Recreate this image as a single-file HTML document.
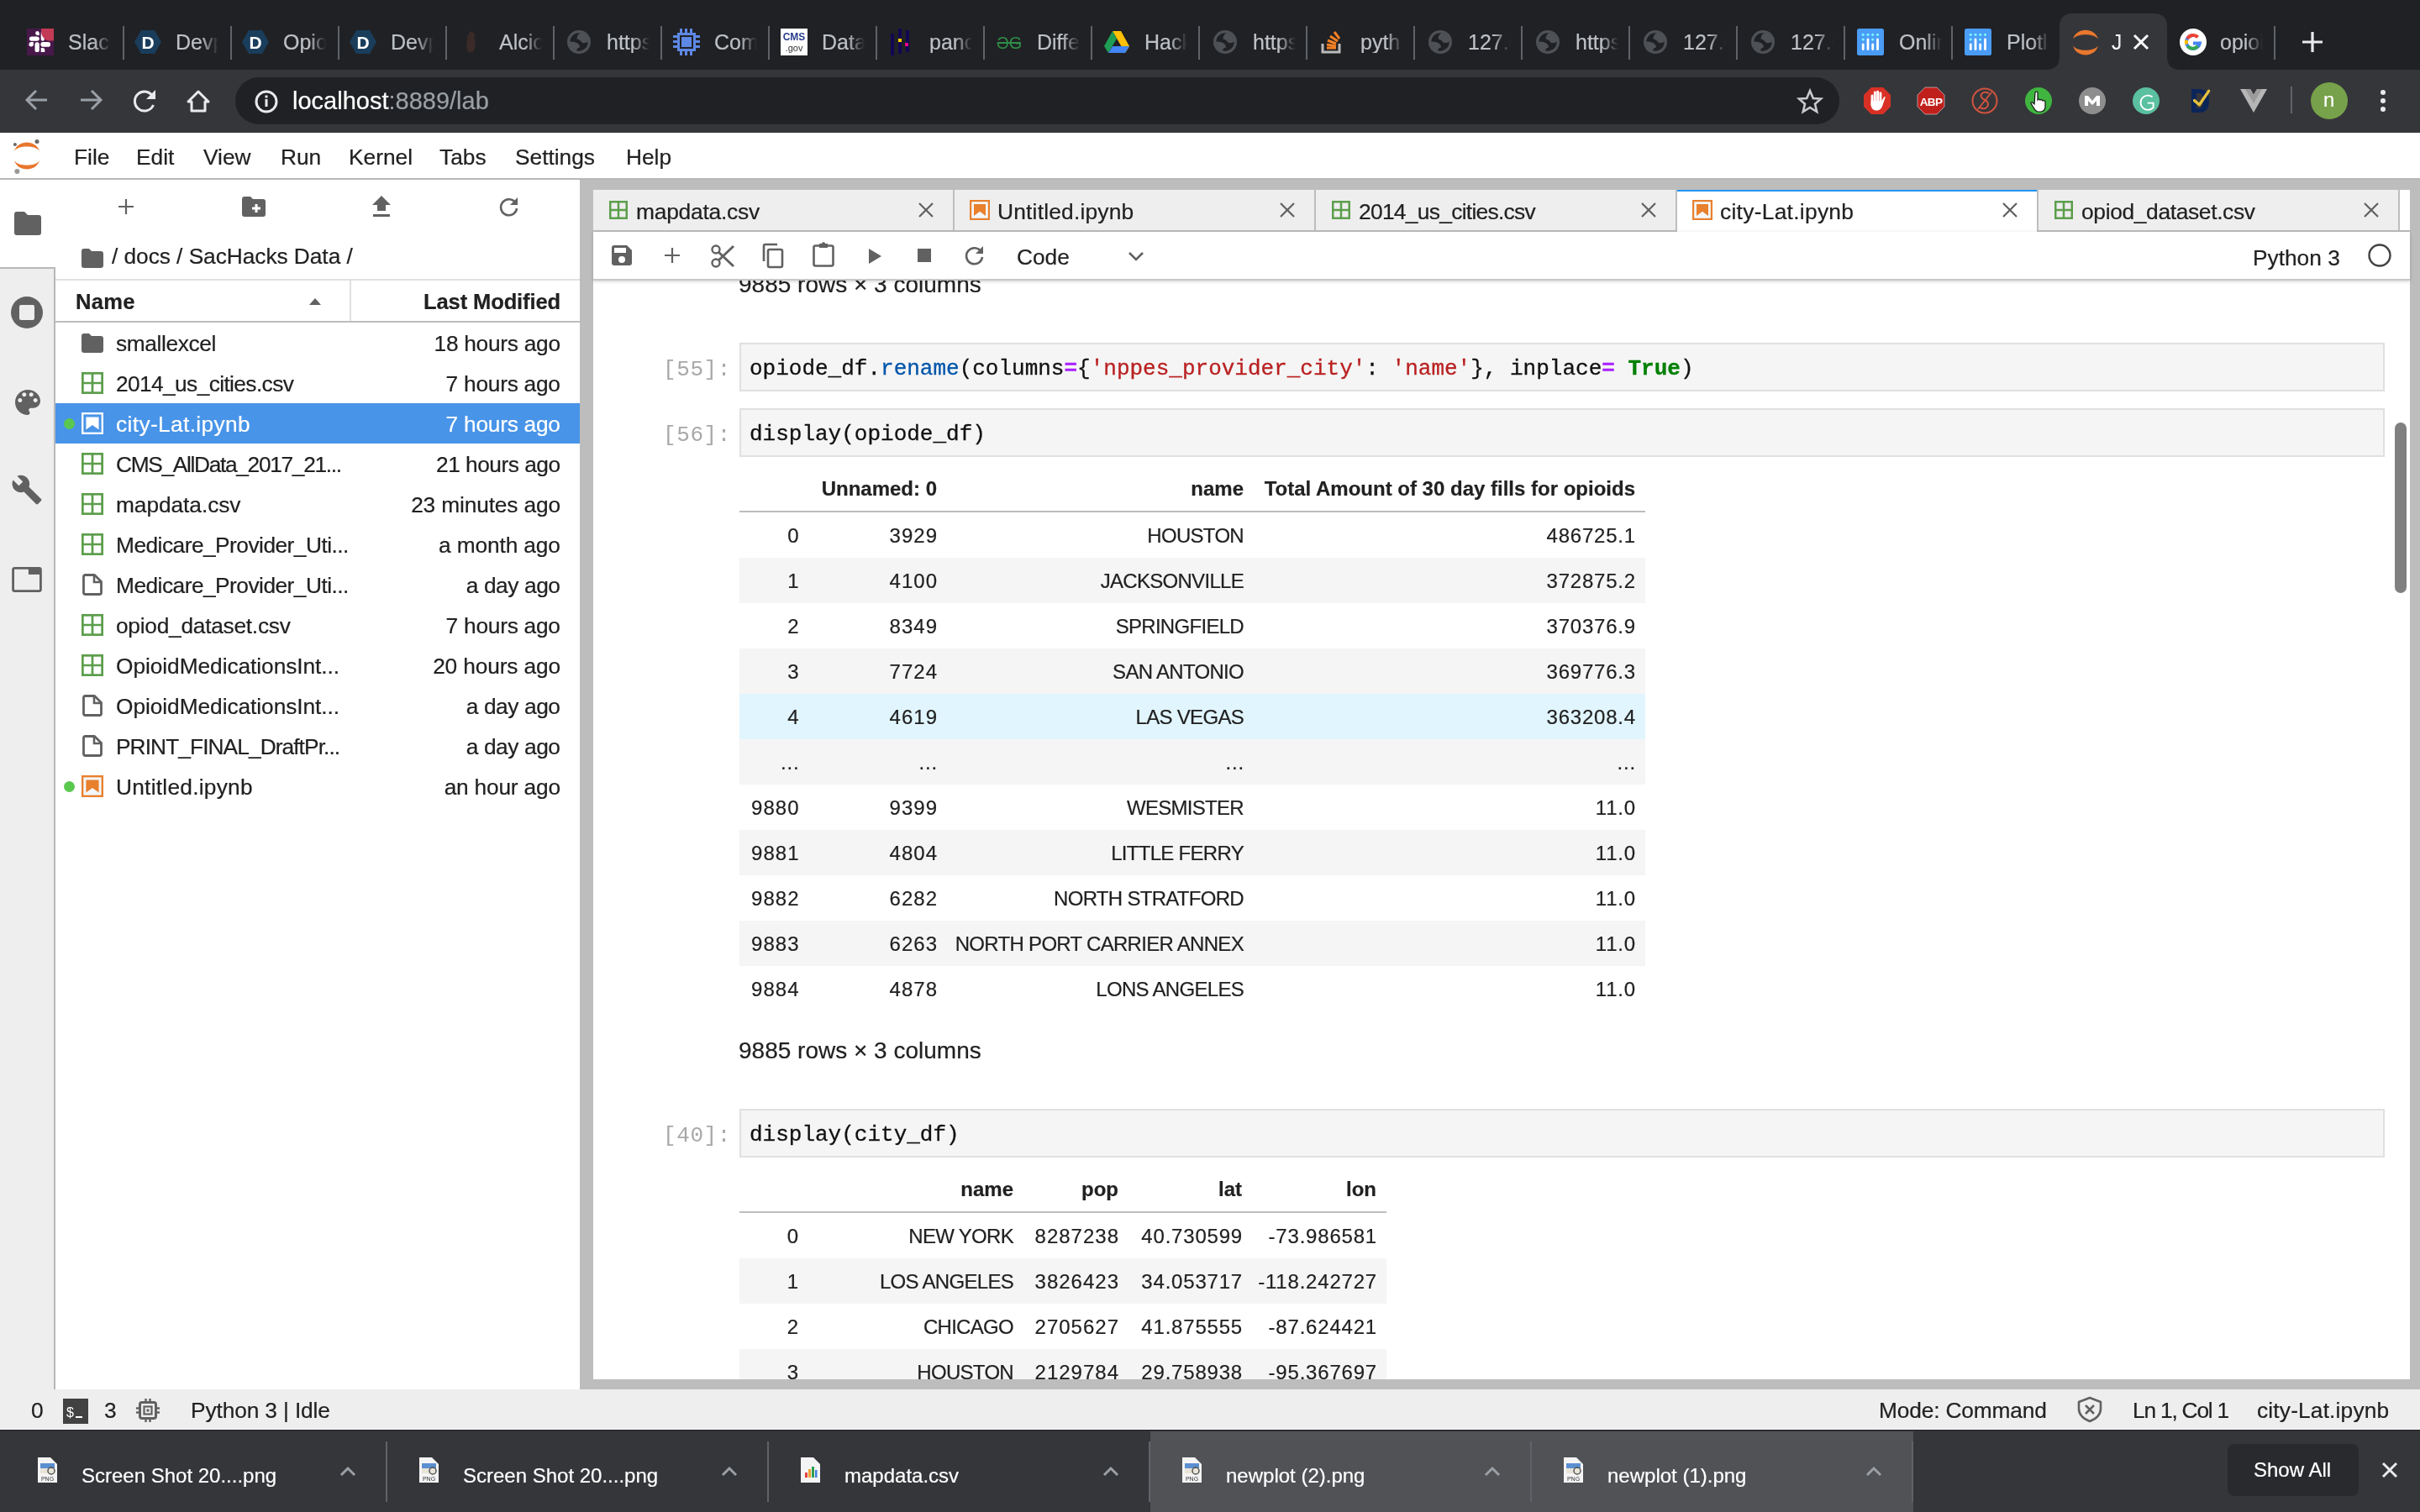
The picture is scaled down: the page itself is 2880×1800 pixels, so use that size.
<!DOCTYPE html><html><head><meta charset="utf-8"><title>JupyterLab</title><style>
*{box-sizing:border-box;margin:0;padding:0}
html,body{width:2880px;height:1800px;overflow:hidden;background:#fff;font-family:"Liberation Sans",sans-serif;color:#212121}
.a{position:absolute}
.t{position:absolute;white-space:nowrap;line-height:1;-webkit-text-stroke:0.2px currentColor}
svg{position:absolute;overflow:visible}
#tabstrip{position:absolute;left:0;top:0;width:2880px;height:83px;background:#202124}
#toolbar{position:absolute;left:0;top:83px;width:2880px;height:75px;background:#35363a}
.ctab{position:absolute;top:16px;height:67px;width:128px;overflow:hidden}
.ctab .tx{position:absolute;left:62px;top:32px;font-size:24px;color:#bdc1c6;white-space:nowrap;line-height:1;width:44px;overflow:hidden;
 -webkit-mask-image:linear-gradient(to right,#000 60%,transparent 100%)}
.csep{position:absolute;top:31px;width:2px;height:40px;background:#5f6368}
#menubar{position:absolute;left:0;top:158px;width:2880px;height:56px;background:#fff;border-bottom:2px solid #b8b8b8}
.mi{position:absolute;top:177px;font-size:26px;color:#212121;line-height:1;white-space:nowrap}
#leftbar{position:absolute;left:0;top:214px;width:66px;height:1440px;background:#eee;border-right:2px solid #b8b8b8}
#fb{position:absolute;left:66px;top:214px;width:624px;height:1440px;background:#fff}
#dock{position:absolute;left:690px;top:214px;width:2190px;height:1440px;background:#bdbdbd}
#status{position:absolute;left:0;top:1654px;width:2880px;height:48px;background:#eee;border-bottom:1px solid #f8f8f8}
#shelf{position:absolute;left:0;top:1702px;width:2880px;height:98px;background:#35363a;border-top:1px solid #1f1f21}
</style></head><body><div id="root" style="position:absolute;left:0;top:0;width:2880px;height:1800px;overflow:hidden;will-change:transform">
<div id="tabstrip">
<svg style="left:32px;top:34px" width="32" height="32" viewBox="0 0 32 32"><rect width="32" height="32" fill="#48184a"/><g fill="#fff"><path d="M12.2 3 a2.6 2.6 0 0 0 0 5.1 h2.6 v-2.6 a2.5 2.5 0 0 0 -2.6 -2.5z"/><rect x="2.9" y="9.4" width="11.9" height="5.4" rx="2.7"/><rect x="16.7" y="3" width="4.2" height="11.8" rx="2.1"/><path d="M5.4 16.1 h2.4 v2.6 a2.7 2.7 0 1 1 -2.4 -2.6z"/><rect x="9.5" y="16.3" width="5.3" height="11.7" rx="2.6"/><rect x="16.4" y="16.1" width="11.6" height="5.6" rx="2.8"/><path d="M16.7 22.9 h2.1 a2.5 2.5 0 0 1 2.5 2.5 v2.6 h-4.6z"/></g><path d="M17 0 H32 V14.6 H28 A11 11 0 0 1 17 3.6z" fill="#c23a56"/></svg>
<div class="t" style="left:81px;top:38px;font-size:25px;color:#bdc1c6;font-weight:400;width:51px;overflow:hidden;-webkit-mask-image:linear-gradient(to right,#000 60%,transparent 100%);">Slack</div>
<div class="csep" style="left:146px"></div>
<svg style="left:160px;top:34px" width="32" height="32" viewBox="0 0 32 32"><polygon points="8,2 24,2 32,16 24,30 8,30 0,16" fill="#1a3d5c"/><text x="16" y="24" text-anchor="middle" font-family="Liberation Sans" font-weight="700" font-size="21" fill="#fff">D</text></svg>
<div class="t" style="left:209px;top:38px;font-size:25px;color:#bdc1c6;font-weight:400;width:51px;overflow:hidden;-webkit-mask-image:linear-gradient(to right,#000 60%,transparent 100%);">Devp</div>
<div class="csep" style="left:274px"></div>
<svg style="left:288px;top:34px" width="32" height="32" viewBox="0 0 32 32"><polygon points="8,2 24,2 32,16 24,30 8,30 0,16" fill="#1a3d5c"/><text x="16" y="24" text-anchor="middle" font-family="Liberation Sans" font-weight="700" font-size="21" fill="#fff">D</text></svg>
<div class="t" style="left:337px;top:38px;font-size:25px;color:#bdc1c6;font-weight:400;width:51px;overflow:hidden;-webkit-mask-image:linear-gradient(to right,#000 60%,transparent 100%);">Opio</div>
<div class="csep" style="left:402px"></div>
<svg style="left:416px;top:34px" width="32" height="32" viewBox="0 0 32 32"><polygon points="8,2 24,2 32,16 24,30 8,30 0,16" fill="#1a3d5c"/><text x="16" y="24" text-anchor="middle" font-family="Liberation Sans" font-weight="700" font-size="21" fill="#fff">D</text></svg>
<div class="t" style="left:465px;top:38px;font-size:25px;color:#bdc1c6;font-weight:400;width:51px;overflow:hidden;-webkit-mask-image:linear-gradient(to right,#000 60%,transparent 100%);">Devp</div>
<div class="csep" style="left:530px"></div>
<svg style="left:545px;top:34px" width="32" height="32" viewBox="0 0 32 32"><path d="M14 4 q5 -1 6 4 q-1 3 0 6 q2 8 -2 14 h-6 q-3 -6 -1 -14 q-1 -4 3 -10z" fill="#3a2a28"/></svg>
<div class="t" style="left:594px;top:38px;font-size:25px;color:#bdc1c6;font-weight:400;width:51px;overflow:hidden;-webkit-mask-image:linear-gradient(to right,#000 60%,transparent 100%);">Alcic</div>
<div class="csep" style="left:658px"></div>
<svg style="left:675px;top:36px" width="28" height="28" viewBox="0 0 28 28"><circle cx="14" cy="14" r="14" fill="#4e5155"/><circle cx="14" cy="14" r="10.7" fill="#202124"/><path d="M15.7 3.3 Q11.5 5 11.6 10.6 Q15.5 11.2 17.9 14.9 H21.9 L25.2 13.6 A11.3 11.3 0 0 0 15.7 2.8z" fill="#4e5155"/><path d="M3.3 13.6 Q9 13.4 12 15.3 Q15.2 17.5 14.9 20.5 Q11.3 20.8 10.9 25 A11.3 11.3 0 0 1 2.8 13.6z" fill="#4e5155"/></svg>
<div class="t" style="left:722px;top:38px;font-size:25px;color:#bdc1c6;font-weight:400;width:51px;overflow:hidden;-webkit-mask-image:linear-gradient(to right,#000 60%,transparent 100%);">https</div>
<div class="csep" style="left:786px"></div>
<svg style="left:801px;top:34px" width="32" height="32" viewBox="0 0 32 32"><g fill="#5e88e5"><rect x="5" y="5" width="22" height="22"/><rect x="8" y="0" width="3" height="5"/><rect x="14" y="0" width="3" height="5"/><rect x="20" y="0" width="3" height="5"/><rect x="8" y="27" width="3" height="5"/><rect x="14" y="27" width="3" height="5"/><rect x="20" y="27" width="3" height="5"/><rect x="0" y="8" width="5" height="3"/><rect x="0" y="14" width="5" height="3"/><rect x="0" y="20" width="5" height="3"/><rect x="27" y="8" width="5" height="3"/><rect x="27" y="14" width="5" height="3"/><rect x="27" y="20" width="5" height="3"/></g><rect x="8" y="8" width="16" height="16" fill="#202124"/><rect x="10" y="10" width="12" height="12" fill="#5e88e5"/></svg>
<div class="t" style="left:850px;top:38px;font-size:25px;color:#bdc1c6;font-weight:400;width:51px;overflow:hidden;-webkit-mask-image:linear-gradient(to right,#000 60%,transparent 100%);">Com</div>
<div class="csep" style="left:914px"></div>
<svg style="left:929px;top:34px" width="32" height="32" viewBox="0 0 32 32"><rect width="32" height="32" fill="#fff"/><text x="16" y="14" text-anchor="middle" font-family="Liberation Sans" font-weight="700" font-size="12" fill="#2a3f8f">CMS</text><text x="16" y="27" text-anchor="middle" font-family="Liberation Sans" font-size="11" fill="#333">.gov</text></svg>
<div class="t" style="left:978px;top:38px;font-size:25px;color:#bdc1c6;font-weight:400;width:51px;overflow:hidden;-webkit-mask-image:linear-gradient(to right,#000 60%,transparent 100%);">Data</div>
<div class="csep" style="left:1042px"></div>
<svg style="left:1057px;top:34px" width="32" height="32" viewBox="0 0 32 32"><g fill="#130754"><rect x="3" y="6" width="4" height="26"/><rect x="12" y="0" width="4" height="30"/><rect x="21" y="2" width="4" height="26"/></g><rect x="12" y="12" width="4" height="4" fill="#ffca00"/><rect x="20" y="17" width="4" height="4" fill="#e70488"/></svg>
<div class="t" style="left:1106px;top:38px;font-size:25px;color:#bdc1c6;font-weight:400;width:51px;overflow:hidden;-webkit-mask-image:linear-gradient(to right,#000 60%,transparent 100%);">panc</div>
<div class="csep" style="left:1170px"></div>
<svg style="left:1185px;top:34px" width="32" height="32" viewBox="0 0 32 32"><text x="16" y="24" text-anchor="middle" font-family="Liberation Sans" font-size="20" fill="#2f8d46">ƏG</text><rect x="2" y="16" width="28" height="2" fill="#2f8d46"/></svg>
<div class="t" style="left:1234px;top:38px;font-size:25px;color:#bdc1c6;font-weight:400;width:51px;overflow:hidden;-webkit-mask-image:linear-gradient(to right,#000 60%,transparent 100%);">Diffe</div>
<div class="csep" style="left:1298px"></div>
<svg style="left:1313px;top:34px" width="32" height="32" viewBox="0 0 32 32"><polygon points="11,3 21,3 31,21 26,29" fill="#ffc107"/><polygon points="11,3 1,21 6,29 16,12" fill="#1e9e55"/><polygon points="6,29 26,29 31,21 11,21" fill="#4285f4"/></svg>
<div class="t" style="left:1362px;top:38px;font-size:25px;color:#bdc1c6;font-weight:400;width:51px;overflow:hidden;-webkit-mask-image:linear-gradient(to right,#000 60%,transparent 100%);">Hack</div>
<div class="csep" style="left:1426px"></div>
<svg style="left:1444px;top:36px" width="28" height="28" viewBox="0 0 28 28"><circle cx="14" cy="14" r="14" fill="#4e5155"/><circle cx="14" cy="14" r="10.7" fill="#202124"/><path d="M15.7 3.3 Q11.5 5 11.6 10.6 Q15.5 11.2 17.9 14.9 H21.9 L25.2 13.6 A11.3 11.3 0 0 0 15.7 2.8z" fill="#4e5155"/><path d="M3.3 13.6 Q9 13.4 12 15.3 Q15.2 17.5 14.9 20.5 Q11.3 20.8 10.9 25 A11.3 11.3 0 0 1 2.8 13.6z" fill="#4e5155"/></svg>
<div class="t" style="left:1491px;top:38px;font-size:25px;color:#bdc1c6;font-weight:400;width:51px;overflow:hidden;-webkit-mask-image:linear-gradient(to right,#000 60%,transparent 100%);">https</div>
<div class="csep" style="left:1554px"></div>
<svg style="left:1570px;top:34px" width="32" height="32" viewBox="0 0 32 32"><path d="M4 18 v10 h20 v-10" fill="none" stroke="#bcbbbb" stroke-width="3"/><g stroke="#f48024" stroke-width="3"><line x1="9" y1="23" x2="20" y2="23"/><line x1="9" y1="19" x2="20" y2="21"/><line x1="10" y1="14" x2="20" y2="18"/><line x1="13" y1="9" x2="22" y2="15"/><line x1="18" y1="4" x2="24" y2="12"/></g></svg>
<div class="t" style="left:1619px;top:38px;font-size:25px;color:#bdc1c6;font-weight:400;width:51px;overflow:hidden;-webkit-mask-image:linear-gradient(to right,#000 60%,transparent 100%);">pyth</div>
<div class="csep" style="left:1682px"></div>
<svg style="left:1700px;top:36px" width="28" height="28" viewBox="0 0 28 28"><circle cx="14" cy="14" r="14" fill="#4e5155"/><circle cx="14" cy="14" r="10.7" fill="#202124"/><path d="M15.7 3.3 Q11.5 5 11.6 10.6 Q15.5 11.2 17.9 14.9 H21.9 L25.2 13.6 A11.3 11.3 0 0 0 15.7 2.8z" fill="#4e5155"/><path d="M3.3 13.6 Q9 13.4 12 15.3 Q15.2 17.5 14.9 20.5 Q11.3 20.8 10.9 25 A11.3 11.3 0 0 1 2.8 13.6z" fill="#4e5155"/></svg>
<div class="t" style="left:1747px;top:38px;font-size:25px;color:#bdc1c6;font-weight:400;width:51px;overflow:hidden;-webkit-mask-image:linear-gradient(to right,#000 60%,transparent 100%);">127.0</div>
<div class="csep" style="left:1810px"></div>
<svg style="left:1828px;top:36px" width="28" height="28" viewBox="0 0 28 28"><circle cx="14" cy="14" r="14" fill="#4e5155"/><circle cx="14" cy="14" r="10.7" fill="#202124"/><path d="M15.7 3.3 Q11.5 5 11.6 10.6 Q15.5 11.2 17.9 14.9 H21.9 L25.2 13.6 A11.3 11.3 0 0 0 15.7 2.8z" fill="#4e5155"/><path d="M3.3 13.6 Q9 13.4 12 15.3 Q15.2 17.5 14.9 20.5 Q11.3 20.8 10.9 25 A11.3 11.3 0 0 1 2.8 13.6z" fill="#4e5155"/></svg>
<div class="t" style="left:1875px;top:38px;font-size:25px;color:#bdc1c6;font-weight:400;width:51px;overflow:hidden;-webkit-mask-image:linear-gradient(to right,#000 60%,transparent 100%);">https</div>
<div class="csep" style="left:1938px"></div>
<svg style="left:1956px;top:36px" width="28" height="28" viewBox="0 0 28 28"><circle cx="14" cy="14" r="14" fill="#4e5155"/><circle cx="14" cy="14" r="10.7" fill="#202124"/><path d="M15.7 3.3 Q11.5 5 11.6 10.6 Q15.5 11.2 17.9 14.9 H21.9 L25.2 13.6 A11.3 11.3 0 0 0 15.7 2.8z" fill="#4e5155"/><path d="M3.3 13.6 Q9 13.4 12 15.3 Q15.2 17.5 14.9 20.5 Q11.3 20.8 10.9 25 A11.3 11.3 0 0 1 2.8 13.6z" fill="#4e5155"/></svg>
<div class="t" style="left:2003px;top:38px;font-size:25px;color:#bdc1c6;font-weight:400;width:51px;overflow:hidden;-webkit-mask-image:linear-gradient(to right,#000 60%,transparent 100%);">127.0</div>
<div class="csep" style="left:2066px"></div>
<svg style="left:2084px;top:36px" width="28" height="28" viewBox="0 0 28 28"><circle cx="14" cy="14" r="14" fill="#4e5155"/><circle cx="14" cy="14" r="10.7" fill="#202124"/><path d="M15.7 3.3 Q11.5 5 11.6 10.6 Q15.5 11.2 17.9 14.9 H21.9 L25.2 13.6 A11.3 11.3 0 0 0 15.7 2.8z" fill="#4e5155"/><path d="M3.3 13.6 Q9 13.4 12 15.3 Q15.2 17.5 14.9 20.5 Q11.3 20.8 10.9 25 A11.3 11.3 0 0 1 2.8 13.6z" fill="#4e5155"/></svg>
<div class="t" style="left:2131px;top:38px;font-size:25px;color:#bdc1c6;font-weight:400;width:51px;overflow:hidden;-webkit-mask-image:linear-gradient(to right,#000 60%,transparent 100%);">127.0</div>
<div class="csep" style="left:2194px"></div>
<svg style="left:2210px;top:34px" width="32" height="32" viewBox="0 0 32 32"><rect width="32" height="32" rx="2.5" fill="#4a9cf5"/><g fill="#80ffff"><circle cx="7.2" cy="7.3" r="1.5"/><circle cx="13" cy="7.3" r="1.5"/><circle cx="18.7" cy="7.3" r="1.5"/><circle cx="24.5" cy="7.3" r="1.5"/><circle cx="7.2" cy="13.1" r="1.5"/><circle cx="18.7" cy="13.1" r="1.5"/></g><g fill="#fff"><rect x="5.8" y="17.5" width="2.8" height="8.5" rx="1.4"/><rect x="11.6" y="11.6" width="2.8" height="14.4" rx="1.4"/><rect x="17.3" y="17.5" width="2.8" height="8.5" rx="1.4"/><rect x="23.1" y="11.6" width="2.8" height="14.4" rx="1.4"/></g></svg>
<div class="t" style="left:2260px;top:38px;font-size:25px;color:#bdc1c6;font-weight:400;width:51px;overflow:hidden;-webkit-mask-image:linear-gradient(to right,#000 60%,transparent 100%);">Onlir</div>
<div class="csep" style="left:2322px"></div>
<svg style="left:2338px;top:34px" width="32" height="32" viewBox="0 0 32 32"><rect width="32" height="32" rx="2.5" fill="#4a9cf5"/><g fill="#80ffff"><circle cx="7.2" cy="7.3" r="1.5"/><circle cx="13" cy="7.3" r="1.5"/><circle cx="18.7" cy="7.3" r="1.5"/><circle cx="24.5" cy="7.3" r="1.5"/><circle cx="7.2" cy="13.1" r="1.5"/><circle cx="18.7" cy="13.1" r="1.5"/></g><g fill="#fff"><rect x="5.8" y="17.5" width="2.8" height="8.5" rx="1.4"/><rect x="11.6" y="11.6" width="2.8" height="14.4" rx="1.4"/><rect x="17.3" y="17.5" width="2.8" height="8.5" rx="1.4"/><rect x="23.1" y="11.6" width="2.8" height="14.4" rx="1.4"/></g></svg>
<div class="t" style="left:2388px;top:38px;font-size:25px;color:#bdc1c6;font-weight:400;width:51px;overflow:hidden;-webkit-mask-image:linear-gradient(to right,#000 60%,transparent 100%);">Plotl</div>
<svg style="left:2435px;top:16px" width="160" height="67" viewBox="0 0 160 67"><path d="M0 67 q16 0 16 -16 v-35 q0 -16 16 -16 h96 q16 0 16 16 v35 q0 16 16 16z" fill="#35363a"/></svg>
<svg style="left:2466px;top:34px" width="32" height="32" viewBox="0 0 32 32"><path d="M1 12.5 C5 -2 27 -2 31 12.5 C26 5.5 6 5.5 1 12.5z" fill="#e8772e"/><path d="M1 20.5 C5 35 27 35 31 20.5 C26 27.5 6 27.5 1 20.5z" fill="#e8772e"/></svg>
<div class="t" style="left:2513px;top:38px;font-size:25px;color:#fff;font-weight:400;width:13px;overflow:hidden;-webkit-mask-image:linear-gradient(to right,#000 70%,transparent 100%);">JupyterLab</div>
<svg style="left:2538px;top:40px" width="20" height="20" viewBox="0 0 20 20"><path d="M2 2 L18 18 M18 2 L2 18" stroke="#fff" stroke-width="3"/></svg>
<svg style="left:2594px;top:34px" width="32" height="32" viewBox="0 0 32 32"><circle cx="16" cy="16" r="16" fill="#fff"/><path d="M16 8 a8 8 0 1 0 7.8 9.5 h-7.8" fill="none" stroke="#4285f4" stroke-width="4"/><path d="M9.2 12 a8 8 0 0 1 12.5 -1.8" fill="none" stroke="#ea4335" stroke-width="4"/><path d="M8.2 18.5 a8 8 0 0 1 0 -5" fill="none" stroke="#fbbc05" stroke-width="4"/><path d="M9.5 21 a8 8 0 0 0 12 0" fill="none" stroke="#34a853" stroke-width="4"/></svg>
<div class="t" style="left:2642px;top:38px;font-size:25px;color:#bdc1c6;font-weight:400;width:51px;overflow:hidden;-webkit-mask-image:linear-gradient(to right,#000 60%,transparent 100%);">opioid</div>
<div class="csep" style="left:2706px"></div>
<svg style="left:2738px;top:36px" width="28" height="28" viewBox="0 0 28 28"><path d="M14 2 V26 M2 14 H26" stroke="#e8eaed" stroke-width="3.2"/></svg>
</div>
<div id="toolbar"></div>
<svg style="left:30px;top:106px" width="28" height="26" viewBox="0 0 28 26"><path d="M26 13 H3 M13 2 L2 13 L13 24" fill="none" stroke="#9aa0a6" stroke-width="3"/></svg>
<svg style="left:94px;top:106px" width="28" height="26" viewBox="0 0 28 26"><path d="M2 13 H25 M15 2 L26 13 L15 24" fill="none" stroke="#9aa0a6" stroke-width="3"/></svg>
<svg style="left:158px;top:106px" width="30" height="28" viewBox="0 0 30 28"><path d="M24 9 A11.5 11.5 0 1 0 24.5 19" fill="none" stroke="#e8eaed" stroke-width="3"/><polygon points="27,1 27,12 16,12" fill="#e8eaed"/></svg>
<svg style="left:222px;top:106px" width="28" height="28" viewBox="0 0 28 28"><path d="M14 3 L2 15 H6 V26 H22 V15 H26z" fill="none" stroke="#e8eaed" stroke-width="3" stroke-linejoin="round"/></svg>
<div class="a" style="left:280px;top:92px;width:1909px;height:56px;border-radius:28px;background:#202124"></div>
<svg style="left:302px;top:106px" width="30" height="30" viewBox="0 0 30 30"><circle cx="15" cy="15" r="12" fill="none" stroke="#e8eaed" stroke-width="3"/><rect x="13.5" y="12" width="3" height="9" fill="#e8eaed"/><rect x="13.5" y="7.5" width="3" height="3" fill="#e8eaed"/></svg>
<div class="t" style="left:348px;top:106px;font-size:29px;color:#fff;font-weight:400;">localhost<span style="color:#9aa0a6">:8889/lab</span></div>
<svg style="left:2138px;top:105px" width="32" height="32" viewBox="0 0 32 32"><path d="M16 3 L19.8 12 L29 12.6 L22 18.8 L24.2 28 L16 23 L7.8 28 L10 18.8 L3 12.6 L12.2 12z" fill="none" stroke="#c8cacb" stroke-width="2.6" stroke-linejoin="miter"/></svg>
<svg style="left:2218px;top:104px" width="32" height="32" viewBox="0 0 32 32"><polygon points="9,0 23,0 32,9 32,23 23,32 9,32 0,23 0,9" fill="#d93025"/><g fill="#fff"><rect x="8.6" y="8.5" width="2.9" height="14" rx="1.45"/><rect x="11.9" y="4.5" width="2.9" height="16" rx="1.45"/><rect x="15.2" y="3.8" width="2.9" height="17" rx="1.45"/><rect x="18.5" y="5.5" width="2.9" height="15" rx="1.45"/><path d="M8.6 16 h12.8 l2.6 -4.2 q1 -1.3 1.8 -0.4 l-3.2 9.5 q-2 6.6 -7.2 6.6 q-6 0 -6.8 -6z"/></g></svg>
<svg style="left:2282px;top:104px" width="32" height="32" viewBox="0 0 32 32"><polygon points="9,0 23,0 32,9 32,23 23,32 9,32 0,23 0,9" fill="#c0201c" stroke="#ddd" stroke-width="0.6"/><text x="16" y="22" text-anchor="middle" font-family="Liberation Sans" font-weight="700" font-size="13.5" letter-spacing="-0.6" fill="#fff">ABP</text></svg>
<svg style="left:2346px;top:104px" width="32" height="32" viewBox="0 0 32 32"><circle cx="16" cy="16" r="14.5" fill="none" stroke="#d0533f" stroke-width="2"/><path d="M21 7 q-6 -3 -9 1 q-2 4 4 7 q6 3 3 8 q-3 4 -9 1 M8 26 L24 6" fill="none" stroke="#d0533f" stroke-width="2"/></svg>
<svg style="left:2410px;top:104px" width="32" height="32" viewBox="0 0 32 32"><circle cx="16" cy="16" r="16" fill="#3fb53f"/><path d="M12 6 q2 -2 3 0 v9 l1 -1 q2 0 2 1 q2 -1 3 1 q2 -1 3 1 v6 q0 5 -5 6 h-4 q-3 -1 -5 -5 l-3 -5 q0 -2 2 -1 l2 2z" fill="#fff" stroke="#111" stroke-width="1.2"/></svg>
<svg style="left:2474px;top:104px" width="32" height="32" viewBox="0 0 32 32"><circle cx="16" cy="16" r="16" fill="#8e8e8e"/><path d="M7 22 V10 h4 l5 6 l5 -6 h4 v12 h-4 v-6 l-5 5 l-5 -5 v6z" fill="#fff"/></svg>
<svg style="left:2538px;top:104px" width="32" height="32" viewBox="0 0 32 32"><circle cx="16" cy="16" r="16" fill="#5ac09f"/><path d="M23.6 11.6 A8.6 8.6 0 1 0 24 24.5" fill="none" stroke="#fff" stroke-width="1.9"/><path d="M17.8 18.6 H24.6 V25" fill="none" stroke="#fff" stroke-width="1.9"/></svg>
<svg style="left:2603px;top:104px" width="32" height="32" viewBox="0 0 32 32"><path d="M5 2 h9 q12 0 12 14 q0 14 -12 14 h-9z M11 7 v18 h3 q5 0 5 -9 q0 -9 -5 -9z" fill="#0b2559" fill-rule="evenodd"/><path d="M8.5 15.6 L14.4 20.8 L25.6 4.4" fill="none" stroke="#e6c13d" stroke-width="3.4" stroke-linecap="round" stroke-linejoin="round"/></svg>
<svg style="left:2666px;top:106px" width="32" height="28" viewBox="0 0 32 28"><polygon points="0,0 8,0 16,14 24,0 32,0 16,28" fill="#b6b6b6"/><polygon points="6,0 12.5,0 16,6 19.5,0 26,0 16,17" fill="#9c9c9c"/><polygon points="12.5,0 19.5,0 16,6" fill="#35363a"/></svg>
<div class="a" style="left:2726px;top:103px;width:2px;height:32px;background:#5f6368"></div>
<div class="a" style="left:2750px;top:98px;width:44px;height:44px;border-radius:22px;background:#77a14a"></div>
<div class="t" style="left:2765px;top:107px;font-size:24px;color:#fff;font-weight:400;">n</div>
<svg style="left:2828px;top:106px" width="16" height="28" viewBox="0 0 16 28"><circle cx="8" cy="4" r="3" fill="#e8eaed"/><circle cx="8" cy="14" r="3" fill="#e8eaed"/><circle cx="8" cy="24" r="3" fill="#e8eaed"/></svg>
<div id="menubar"></div>
<svg style="left:10px;top:160px" width="50" height="50" viewBox="0 0 50 50"><path d="M7 20 C11 6 33 6 37 20 C33 12.7 11 12.7 7 20z" fill="#e8772e"/><path d="M7 31 C11 45 33 45 37 31 C33 38.6 11 38.6 7 31z" fill="#e8772e"/><circle cx="7.9" cy="11.9" r="2" fill="#666"/><circle cx="34" cy="8.6" r="2.5" fill="#666"/><circle cx="10.4" cy="44" r="3" fill="#999"/></svg>
<div class="t" style="left:88px;top:174px;font-size:26.3px;color:#212121;font-weight:400;">File</div>
<div class="t" style="left:162px;top:174px;font-size:26.3px;color:#212121;font-weight:400;">Edit</div>
<div class="t" style="left:242px;top:174px;font-size:26.3px;color:#212121;font-weight:400;">View</div>
<div class="t" style="left:334px;top:174px;font-size:26.3px;color:#212121;font-weight:400;">Run</div>
<div class="t" style="left:415px;top:174px;font-size:26.3px;color:#212121;font-weight:400;">Kernel</div>
<div class="t" style="left:523px;top:174px;font-size:26.3px;color:#212121;font-weight:400;">Tabs</div>
<div class="t" style="left:613px;top:174px;font-size:26.3px;color:#212121;font-weight:400;">Settings</div>
<div class="t" style="left:745px;top:174px;font-size:26.3px;color:#212121;font-weight:400;">Help</div>
<div id="leftbar"></div>
<div class="a" style="left:0;top:214px;width:66px;height:106px;background:#fff;border-bottom:2px solid #b8b8b8"></div>
<svg style="left:15px;top:251px" width="36" height="30" viewBox="0 0 36 30"><path d="M2 4 q0 -3 3 -3 h9 l4 4 h13 q3 0 3 3 v18 q0 3 -3 3 h-26 q-3 0 -3 -3z" fill="#616161"/></svg>
<svg style="left:12px;top:352px" width="40" height="40" viewBox="0 0 40 40"><circle cx="20" cy="20" r="19" fill="#616161"/><rect x="11" y="11" width="18" height="18" rx="2" fill="#eee"/></svg>
<svg style="left:13px;top:459px" width="40" height="40" viewBox="0 0 24 24"><path fill="#616161" d="M12 3c-4.97 0-9 4.03-9 9s4.03 9 9 9c.83 0 1.5-.67 1.5-1.5 0-.39-.15-.74-.39-1.01-.23-.26-.38-.61-.38-.99 0-.83.67-1.5 1.5-1.5H16c2.76 0 5-2.24 5-5 0-4.42-4.03-8-9-8zm-5.5 9c-.83 0-1.5-.67-1.5-1.5S5.67 9 6.5 9 8 9.67 8 10.5 7.33 12 6.5 12zm3-4C8.67 8 8 7.330 8 6.5S8.67 5 9.5 5s1.5.67 1.5 1.5S10.33 8 9.5 8zm5 0c-.83 0-1.5-.67-1.5-1.5S13.67 5 14.5 5s1.5.67 1.5 1.5S15.33 8 14.5 8zm3 4c-.83 0-1.5-.67-1.5-1.5S16.67 9 17.5 9s1.5.67 1.5 1.5-.67 1.5-1.5 1.5z"/></svg>
<svg style="left:13px;top:564px" width="38" height="38" viewBox="0 0 24 24"><path fill="#616161" d="M22.7 19l-9.1-9.1c.9-2.3.4-5-1.5-6.9-2-2-5-2.4-7.4-1.3L9 6 6 9 1.6 4.7C.4 7.1.9 10.1 2.9 12.1c1.9 1.9 4.6 2.4 6.9 1.5l9.1 9.1c.4.4 1 .4 1.4 0l2.3-2.3c.5-.4.5-1.1.1-1.4z"/></svg>
<svg style="left:14px;top:675px" width="36" height="30" viewBox="0 0 38 32"><rect x="1.5" y="1.5" width="35" height="29" rx="2" fill="none" stroke="#616161" stroke-width="3"/><rect x="21" y="1.5" width="15.5" height="8" fill="#616161"/></svg>
<div id="fb"></div>
<svg style="left:140px;top:236px" width="20" height="20" viewBox="0 0 20 20"><path d="M10 1 V19 M1 10 H19" stroke="#616161" stroke-width="2.2"/></svg>
<svg style="left:288px;top:234px" width="28" height="24" viewBox="0 0 28 24"><path d="M0 3 q0 -3 3 -3 h7 l3 3 h12 q3 0 3 3 v15 q0 3 -3 3 h-22 q-3 0 -3 -3z" fill="#616161"/><path d="M17 9 v10 M12 14 h10" stroke="#fff" stroke-width="3"/></svg>
<svg style="left:443px;top:233px" width="22" height="26" viewBox="0 0 22 26"><polygon points="11,0 0,11 6,11 6,18 16,18 16,11 22,11" fill="#616161"/><rect x="1" y="22" width="20" height="3" fill="#616161"/></svg>
<svg style="left:594px;top:234px" width="24" height="24" viewBox="0 0 24 24"><path d="M19.5 7.5 A9.5 9.5 0 1 0 21 14" fill="none" stroke="#616161" stroke-width="2.6"/><polygon points="22,1 22,10 13,10" fill="#616161"/></svg>
<svg style="left:97px;top:296px" width="26" height="23" viewBox="0 0 26 23"><path d="M0 3 q0 -3 3 -3 h6 l3 3 h11 q3 0 3 3 v14 q0 3 -3 3 h-20 q-3 0 -3 -3z" fill="#616161"/></svg>
<div class="t" style="left:133px;top:292px;font-size:26.3px;color:#212121;font-weight:400;letter-spacing:-0.05px;">/ docs / SacHacks Data /</div>
<div class="a" style="left:66px;top:332px;width:624px;height:2px;background:#e0e0e0"></div>
<div class="a" style="left:66px;top:382px;width:624px;height:2px;background:#bdbdbd"></div>
<div class="a" style="left:416px;top:334px;width:2px;height:48px;background:#e0e0e0"></div>
<div class="t" style="left:90px;top:347px;font-size:25.6px;color:#212121;font-weight:700;letter-spacing:0.3px;">Name</div>
<svg style="left:367px;top:354px" width="16" height="10" viewBox="0 0 16 10"><polygon points="8,1 15,9 1,9" fill="#616161"/></svg>
<div class="t" style="right:2213px;top:347px;font-size:25.6px;color:#212121;font-weight:700;letter-spacing:-0.15px;">Last Modified</div>
<svg style="left:97px;top:397px" width="26" height="23" viewBox="0 0 26 23"><path d="M0 3 q0 -3 3 -3 h6 l3 3 h11 q3 0 3 3 v14 q0 3 -3 3 h-20 q-3 0 -3 -3z" fill="#616161"/></svg>
<div class="t" style="left:138px;top:396px;font-size:26.3px;color:#212121;font-weight:400;letter-spacing:-0.39px;">smallexcel</div>
<div class="t" style="right:2213.2799999999997px;top:396px;font-size:26.3px;color:#212121;font-weight:400;letter-spacing:-0.28px;">18 hours ago</div>
<svg style="left:97px;top:443px" width="26" height="26" viewBox="0 0 26 26"><rect x="1.35" y="1.35" width="23.3" height="23.3" fill="none" stroke="#5c9e4c" stroke-width="2.7"/><path d="M13.0 0 V26 M0 13.0 H26" stroke="#5c9e4c" stroke-width="2.7"/></svg>
<div class="t" style="left:138px;top:444px;font-size:26.3px;color:#212121;font-weight:400;letter-spacing:-0.61px;">2014_us_cities.csv</div>
<div class="t" style="right:2213.25px;top:444px;font-size:26.3px;color:#212121;font-weight:400;letter-spacing:-0.25px;">7 hours ago</div>
<div class="a" style="left:66px;top:480px;width:624px;height:48px;background:#4894e8"></div>
<svg style="left:97px;top:491px" width="26" height="26" viewBox="0 0 24 24"><rect x="1.1" y="1.1" width="21.8" height="21.8" fill="none" stroke="#fff" stroke-width="2.2"/><polygon points="5,5 19,5 19,19 12,13.8 5,19" fill="#fff"/></svg>
<div class="a" style="left:76px;top:498px;width:13px;height:13px;border-radius:7px;background:#5ac84f"></div>
<div class="t" style="left:138px;top:492px;font-size:26.3px;color:#fff;font-weight:400;letter-spacing:0.36px;">city-Lat.ipynb</div>
<div class="t" style="right:2213.25px;top:492px;font-size:26.3px;color:#fff;font-weight:400;letter-spacing:-0.25px;">7 hours ago</div>
<svg style="left:97px;top:539px" width="26" height="26" viewBox="0 0 26 26"><rect x="1.35" y="1.35" width="23.3" height="23.3" fill="none" stroke="#5c9e4c" stroke-width="2.7"/><path d="M13.0 0 V26 M0 13.0 H26" stroke="#5c9e4c" stroke-width="2.7"/></svg>
<div class="t" style="left:138px;top:540px;font-size:26.3px;color:#212121;font-weight:400;letter-spacing:-1.32px;">CMS_AllData_2017_21...</div>
<div class="t" style="right:2213.51px;top:540px;font-size:26.3px;color:#212121;font-weight:400;letter-spacing:-0.51px;">21 hours ago</div>
<svg style="left:97px;top:587px" width="26" height="26" viewBox="0 0 26 26"><rect x="1.35" y="1.35" width="23.3" height="23.3" fill="none" stroke="#5c9e4c" stroke-width="2.7"/><path d="M13.0 0 V26 M0 13.0 H26" stroke="#5c9e4c" stroke-width="2.7"/></svg>
<div class="t" style="left:138px;top:588px;font-size:26.3px;color:#212121;font-weight:400;letter-spacing:-0.06px;">mapdata.csv</div>
<div class="t" style="right:2213.15px;top:588px;font-size:26.3px;color:#212121;font-weight:400;letter-spacing:-0.15px;">23 minutes ago</div>
<svg style="left:97px;top:635px" width="26" height="26" viewBox="0 0 26 26"><rect x="1.35" y="1.35" width="23.3" height="23.3" fill="none" stroke="#5c9e4c" stroke-width="2.7"/><path d="M13.0 0 V26 M0 13.0 H26" stroke="#5c9e4c" stroke-width="2.7"/></svg>
<div class="t" style="left:138px;top:636px;font-size:26.3px;color:#212121;font-weight:400;letter-spacing:-0.52px;">Medicare_Provider_Uti...</div>
<div class="t" style="right:2213.12px;top:636px;font-size:26.3px;color:#212121;font-weight:400;letter-spacing:-0.12px;">a month ago</div>
<svg style="left:97px;top:683px" width="26" height="26" viewBox="0 0 26 26"><path d="M2.5 3.5 q0 -2 2 -2 h11 l8 8 v13 q0 2 -2 2 h-17 q-2 0 -2 -2z" fill="none" stroke="#616161" stroke-width="2.8" stroke-linejoin="round"/><path d="M15 1.5 v8.5 h8.5" fill="none" stroke="#616161" stroke-width="2.6"/></svg>
<div class="t" style="left:138px;top:684px;font-size:26.3px;color:#212121;font-weight:400;letter-spacing:-0.52px;">Medicare_Provider_Uti...</div>
<div class="t" style="right:2213.41px;top:684px;font-size:26.3px;color:#212121;font-weight:400;letter-spacing:-0.41px;">a day ago</div>
<svg style="left:97px;top:731px" width="26" height="26" viewBox="0 0 26 26"><rect x="1.35" y="1.35" width="23.3" height="23.3" fill="none" stroke="#5c9e4c" stroke-width="2.7"/><path d="M13.0 0 V26 M0 13.0 H26" stroke="#5c9e4c" stroke-width="2.7"/></svg>
<div class="t" style="left:138px;top:732px;font-size:26.3px;color:#212121;font-weight:400;letter-spacing:-0.26px;">opiod_dataset.csv</div>
<div class="t" style="right:2213.25px;top:732px;font-size:26.3px;color:#212121;font-weight:400;letter-spacing:-0.25px;">7 hours ago</div>
<svg style="left:97px;top:779px" width="26" height="26" viewBox="0 0 26 26"><rect x="1.35" y="1.35" width="23.3" height="23.3" fill="none" stroke="#5c9e4c" stroke-width="2.7"/><path d="M13.0 0 V26 M0 13.0 H26" stroke="#5c9e4c" stroke-width="2.7"/></svg>
<div class="t" style="left:138px;top:780px;font-size:26.3px;color:#212121;font-weight:400;letter-spacing:-0.06px;">OpioidMedicationsInt...</div>
<div class="t" style="right:2213.15px;top:780px;font-size:26.3px;color:#212121;font-weight:400;letter-spacing:-0.15px;">20 hours ago</div>
<svg style="left:97px;top:827px" width="26" height="26" viewBox="0 0 26 26"><path d="M2.5 3.5 q0 -2 2 -2 h11 l8 8 v13 q0 2 -2 2 h-17 q-2 0 -2 -2z" fill="none" stroke="#616161" stroke-width="2.8" stroke-linejoin="round"/><path d="M15 1.5 v8.5 h8.5" fill="none" stroke="#616161" stroke-width="2.6"/></svg>
<div class="t" style="left:138px;top:828px;font-size:26.3px;color:#212121;font-weight:400;letter-spacing:-0.06px;">OpioidMedicationsInt...</div>
<div class="t" style="right:2213.41px;top:828px;font-size:26.3px;color:#212121;font-weight:400;letter-spacing:-0.41px;">a day ago</div>
<svg style="left:97px;top:875px" width="26" height="26" viewBox="0 0 26 26"><path d="M2.5 3.5 q0 -2 2 -2 h11 l8 8 v13 q0 2 -2 2 h-17 q-2 0 -2 -2z" fill="none" stroke="#616161" stroke-width="2.8" stroke-linejoin="round"/><path d="M15 1.5 v8.5 h8.5" fill="none" stroke="#616161" stroke-width="2.6"/></svg>
<div class="t" style="left:138px;top:876px;font-size:26.3px;color:#212121;font-weight:400;letter-spacing:-0.92px;">PRINT_FINAL_DraftPr...</div>
<div class="t" style="right:2213.41px;top:876px;font-size:26.3px;color:#212121;font-weight:400;letter-spacing:-0.41px;">a day ago</div>
<svg style="left:97px;top:923px" width="26" height="26" viewBox="0 0 24 24"><rect x="2.3833333333333333" y="2.3833333333333333" width="21.233333333333334" height="21.233333333333334" fill="#f4f7fa"/><rect x="1.1" y="1.1" width="21.8" height="21.8" fill="none" stroke="#e8802e" stroke-width="2.2"/><polygon points="5,5 19,5 19,19 12,13.8 5,19" fill="#e8802e"/></svg>
<div class="a" style="left:76px;top:930px;width:13px;height:13px;border-radius:7px;background:#5ac84f"></div>
<div class="t" style="left:138px;top:924px;font-size:26.3px;color:#212121;font-weight:400;letter-spacing:0.25px;">Untitled.ipynb</div>
<div class="t" style="right:2213.2px;top:924px;font-size:26.3px;color:#212121;font-weight:400;letter-spacing:-0.2px;">an hour ago</div>
<div id="dock"></div>
<div class="a" style="left:706px;top:226px;width:2162px;height:1416px;background:#fff"></div>
<div class="a" style="left:706px;top:226px;width:2150px;height:50px;background:#bdbdbd"></div>
<div class="a" style="left:706px;top:274px;width:2162px;height:2px;background:#bdbdbd"></div>
<div class="a" style="left:706px;top:226px;width:428px;height:48px;background:#eee"></div>
<svg style="left:725px;top:239px" width="22" height="22" viewBox="0 0 22 22"><rect x="1.25" y="1.25" width="19.5" height="19.5" fill="none" stroke="#5c9e4c" stroke-width="2.5"/><path d="M11.0 0 V22 M0 11.0 H22" stroke="#5c9e4c" stroke-width="2.5"/></svg>
<div class="t" style="left:757px;top:239px;font-size:26.4px;color:#212121;font-weight:400;letter-spacing:-0.25px;">mapdata.csv</div>
<svg style="left:1093px;top:241px" width="18" height="18" viewBox="0 0 18 18"><path d="M1 1 L17 17 M17 1 L1 17" stroke="#616161" stroke-width="2.2"/></svg>
<div class="a" style="left:1136px;top:226px;width:428px;height:48px;background:#eee"></div>
<svg style="left:1154px;top:238px" width="24" height="24" viewBox="0 0 24 24"><rect x="2.2" y="2.2" width="19.6" height="19.6" fill="#f4f7fa"/><rect x="1.1" y="1.1" width="21.8" height="21.8" fill="none" stroke="#e8802e" stroke-width="2.2"/><polygon points="5,5 19,5 19,19 12,13.8 5,19" fill="#e8802e"/></svg>
<div class="t" style="left:1187px;top:239px;font-size:26.4px;color:#212121;font-weight:400;letter-spacing:0.18px;">Untitled.ipynb</div>
<svg style="left:1523px;top:241px" width="18" height="18" viewBox="0 0 18 18"><path d="M1 1 L17 17 M17 1 L1 17" stroke="#616161" stroke-width="2.2"/></svg>
<div class="a" style="left:1566px;top:226px;width:428px;height:48px;background:#eee"></div>
<svg style="left:1585px;top:239px" width="22" height="22" viewBox="0 0 22 22"><rect x="1.25" y="1.25" width="19.5" height="19.5" fill="none" stroke="#5c9e4c" stroke-width="2.5"/><path d="M11.0 0 V22 M0 11.0 H22" stroke="#5c9e4c" stroke-width="2.5"/></svg>
<div class="t" style="left:1617px;top:239px;font-size:26.4px;color:#212121;font-weight:400;letter-spacing:-0.72px;">2014_us_cities.csv</div>
<svg style="left:1953px;top:241px" width="18" height="18" viewBox="0 0 18 18"><path d="M1 1 L17 17 M17 1 L1 17" stroke="#616161" stroke-width="2.2"/></svg>
<div class="a" style="left:1996px;top:226px;width:428px;height:50px;background:#fff"></div>
<div class="a" style="left:1996px;top:226px;width:428px;height:2px;background:#2196f3"></div>
<svg style="left:2014px;top:238px" width="24" height="24" viewBox="0 0 24 24"><rect x="2.2" y="2.2" width="19.6" height="19.6" fill="#f4f7fa"/><rect x="1.1" y="1.1" width="21.8" height="21.8" fill="none" stroke="#e8802e" stroke-width="2.2"/><polygon points="5,5 19,5 19,19 12,13.8 5,19" fill="#e8802e"/></svg>
<div class="t" style="left:2047px;top:239px;font-size:26.4px;color:#212121;font-weight:400;letter-spacing:0.27px;">city-Lat.ipynb</div>
<svg style="left:2383px;top:241px" width="18" height="18" viewBox="0 0 18 18"><path d="M1 1 L17 17 M17 1 L1 17" stroke="#616161" stroke-width="2.2"/></svg>
<div class="a" style="left:2426px;top:226px;width:428px;height:48px;background:#eee"></div>
<svg style="left:2445px;top:239px" width="22" height="22" viewBox="0 0 22 22"><rect x="1.25" y="1.25" width="19.5" height="19.5" fill="none" stroke="#5c9e4c" stroke-width="2.5"/><path d="M11.0 0 V22 M0 11.0 H22" stroke="#5c9e4c" stroke-width="2.5"/></svg>
<div class="t" style="left:2477px;top:239px;font-size:26.4px;color:#212121;font-weight:400;letter-spacing:-0.36px;">opiod_dataset.csv</div>
<svg style="left:2813px;top:241px" width="18" height="18" viewBox="0 0 18 18"><path d="M1 1 L17 17 M17 1 L1 17" stroke="#616161" stroke-width="2.2"/></svg>
<div class="a" style="left:706px;top:276px;width:2162px;height:58px;background:#fff;border-bottom:2px solid #c8c8c8;box-shadow:0 1px 4px rgba(0,0,0,0.18);z-index:2"></div>
<svg style="z-index:3;left:728px;top:292px" width="24" height="24" viewBox="0 0 24 24"><path d="M0 3 q0 -3 3 -3 h15 l6 6 v15 q0 3 -3 3 h-18 q-3 0 -3 -3z" fill="#616161"/><rect x="3" y="3" width="14" height="6" fill="#fff"/><circle cx="12" cy="17" r="4" fill="#fff"/></svg>
<svg style="z-index:3;left:790px;top:294px" width="20" height="20" viewBox="0 0 20 20"><path d="M10 1 V19 M1 10 H19" stroke="#616161" stroke-width="2.2"/></svg>
<svg style="z-index:3;left:846px;top:291px" width="28" height="28" viewBox="0 0 28 28"><circle cx="6" cy="6" r="4.5" fill="none" stroke="#616161" stroke-width="2.4"/><circle cx="6" cy="22" r="4.5" fill="none" stroke="#616161" stroke-width="2.4"/><path d="M9 9 L27 26 M9 19 L27 2" stroke="#616161" stroke-width="3"/></svg>
<svg style="z-index:3;left:907px;top:290px" width="26" height="30" viewBox="0 0 26 30"><path d="M2 21 V3 q0 -2 2 -2 h14" fill="none" stroke="#616161" stroke-width="2.6"/><rect x="7" y="7" width="17" height="21" rx="2" fill="none" stroke="#616161" stroke-width="2.6"/></svg>
<svg style="z-index:3;left:967px;top:288px" width="26" height="30" viewBox="0 0 26 30"><rect x="1.5" y="4.5" width="23" height="24" rx="2" fill="none" stroke="#616161" stroke-width="2.6"/><rect x="8" y="2" width="10" height="5" fill="#616161"/><circle cx="13" cy="2.5" r="2.2" fill="#616161"/></svg>
<svg style="z-index:3;left:1032px;top:295px" width="18" height="20" viewBox="0 0 18 20"><polygon points="2,1 17,10 2,19" fill="#616161"/></svg>
<svg style="z-index:3;left:1092px;top:296px" width="16" height="16" viewBox="0 0 16 16"><rect width="16" height="16" fill="#616161"/></svg>
<svg style="z-index:3;left:1148px;top:292px" width="24" height="24" viewBox="0 0 24 24"><path d="M19.5 7.5 A9.5 9.5 0 1 0 21 14" fill="none" stroke="#616161" stroke-width="2.6"/><polygon points="22,1 22,10 13,10" fill="#616161"/></svg>
<div class="t" style="left:1210px;top:293px;font-size:26.3px;color:#212121;font-weight:400;z-index:3;">Code</div>
<svg style="z-index:3;left:1342px;top:299px" width="20" height="12" viewBox="0 0 20 12"><path d="M2 2 L10 10 L18 2" fill="none" stroke="#616161" stroke-width="2.6"/></svg>
<div class="t" style="left:2681px;top:294px;font-size:26.3px;color:#212121;font-weight:400;z-index:3;">Python 3</div>
<svg style="z-index:3;left:2818px;top:290px" width="28" height="28" viewBox="0 0 28 28"><circle cx="14" cy="14" r="12.5" fill="none" stroke="#424242" stroke-width="2.4"/></svg>
<div class="a" style="left:706px;top:332px;width:2162px;height:1310px;overflow:hidden;background:#fff">
<div class="t" style="left:173px;top:-7px;font-size:28px;color:#212121;font-weight:400;">9885 rows × 3 columns</div>
<div class="a" style="left:174px;top:76px;width:1958px;height:58px;background:#f5f5f5;border:2px solid #e0e0e0;"></div>
<div class="t" style="right:1998px;top:95px;font-size:26px;color:#a8a8a8;font-weight:400;font-family:'Liberation Mono',monospace;-webkit-text-stroke:0px;letter-spacing:0.6px;">[55]:</div>
<div class="t" style="left:186px;top:94px;font-size:26px;color:#111111;font-weight:400;font-family:'Liberation Mono',monospace;-webkit-text-stroke:0.3px currentColor;">opiode_df.<span style="color:#0055aa">rename</span>(columns<span style="color:#aa22ff;font-weight:700">=</span>{<span style="color:#ba2121">'nppes_provider_city'</span>: <span style="color:#ba2121">'name'</span>}, inplace<span style="color:#aa22ff;font-weight:700">=</span> <span style="color:#008000;font-weight:700">True</span>)</div>
<div class="a" style="left:174px;top:154px;width:1958px;height:58px;background:#f5f5f5;border:2px solid #e0e0e0;"></div>
<div class="t" style="right:1998px;top:173px;font-size:26px;color:#a8a8a8;font-weight:400;font-family:'Liberation Mono',monospace;-webkit-text-stroke:0px;letter-spacing:0.6px;">[56]:</div>
<div class="t" style="left:186px;top:172px;font-size:26px;color:#111111;font-weight:400;font-family:'Liberation Mono',monospace;-webkit-text-stroke:0.3px currentColor;">display(opiode_df)</div>
<div class="t" style="right:1753px;top:238px;font-size:24px;color:#212121;font-weight:700;">Unnamed: 0</div>
<div class="t" style="right:1388px;top:238px;font-size:24px;color:#212121;font-weight:700;">name</div>
<div class="t" style="right:922px;top:238px;font-size:24px;color:#212121;font-weight:700;">Total Amount of 30 day fills for opioids</div>
<div class="a" style="left:174px;top:276px;width:1078px;height:2px;background:#bdbdbd;"></div>
<div class="t" style="right:1917.5px;top:294px;font-size:24px;color:#212121;font-weight:400;letter-spacing:0px;">0</div>
<div class="t" style="right:1752px;top:294px;font-size:24px;color:#212121;font-weight:400;letter-spacing:1.0px;">3929</div>
<div class="t" style="right:1388px;top:294px;font-size:24px;color:#212121;font-weight:400;letter-spacing:-0.7px;">HOUSTON</div>
<div class="t" style="right:921px;top:294px;font-size:24px;color:#212121;font-weight:400;letter-spacing:0.8px;">486725.1</div>
<div class="a" style="left:174px;top:332px;width:1078px;height:54px;background:#f5f5f5;"></div>
<div class="t" style="right:1917.5px;top:348px;font-size:24px;color:#212121;font-weight:400;letter-spacing:0px;">1</div>
<div class="t" style="right:1752px;top:348px;font-size:24px;color:#212121;font-weight:400;letter-spacing:1.0px;">4100</div>
<div class="t" style="right:1388px;top:348px;font-size:24px;color:#212121;font-weight:400;letter-spacing:-0.7px;">JACKSONVILLE</div>
<div class="t" style="right:921px;top:348px;font-size:24px;color:#212121;font-weight:400;letter-spacing:0.8px;">372875.2</div>
<div class="t" style="right:1917.5px;top:402px;font-size:24px;color:#212121;font-weight:400;letter-spacing:0px;">2</div>
<div class="t" style="right:1752px;top:402px;font-size:24px;color:#212121;font-weight:400;letter-spacing:1.0px;">8349</div>
<div class="t" style="right:1388px;top:402px;font-size:24px;color:#212121;font-weight:400;letter-spacing:-0.7px;">SPRINGFIELD</div>
<div class="t" style="right:921px;top:402px;font-size:24px;color:#212121;font-weight:400;letter-spacing:0.8px;">370376.9</div>
<div class="a" style="left:174px;top:440px;width:1078px;height:54px;background:#f5f5f5;"></div>
<div class="t" style="right:1917.5px;top:456px;font-size:24px;color:#212121;font-weight:400;letter-spacing:0px;">3</div>
<div class="t" style="right:1752px;top:456px;font-size:24px;color:#212121;font-weight:400;letter-spacing:1.0px;">7724</div>
<div class="t" style="right:1388px;top:456px;font-size:24px;color:#212121;font-weight:400;letter-spacing:-0.7px;">SAN ANTONIO</div>
<div class="t" style="right:921px;top:456px;font-size:24px;color:#212121;font-weight:400;letter-spacing:0.8px;">369776.3</div>
<div class="a" style="left:174px;top:494px;width:1078px;height:54px;background:#e1f5fe;"></div>
<div class="t" style="right:1917.5px;top:510px;font-size:24px;color:#212121;font-weight:400;letter-spacing:0px;">4</div>
<div class="t" style="right:1752px;top:510px;font-size:24px;color:#212121;font-weight:400;letter-spacing:1.0px;">4619</div>
<div class="t" style="right:1388px;top:510px;font-size:24px;color:#212121;font-weight:400;letter-spacing:-0.7px;">LAS VEGAS</div>
<div class="t" style="right:921px;top:510px;font-size:24px;color:#212121;font-weight:400;letter-spacing:0.8px;">363208.4</div>
<div class="a" style="left:174px;top:548px;width:1078px;height:54px;background:#f5f5f5;"></div>
<div class="t" style="right:1916.5px;top:564px;font-size:24px;color:#212121;font-weight:400;letter-spacing:0.8px;">...</div>
<div class="t" style="right:1752px;top:564px;font-size:24px;color:#212121;font-weight:400;letter-spacing:0.8px;">...</div>
<div class="t" style="right:1387px;top:564px;font-size:24px;color:#212121;font-weight:400;letter-spacing:0.8px;">...</div>
<div class="t" style="right:921px;top:564px;font-size:24px;color:#212121;font-weight:400;letter-spacing:0.8px;">...</div>
<div class="t" style="right:1916.5px;top:618px;font-size:24px;color:#212121;font-weight:400;letter-spacing:1.0px;">9880</div>
<div class="t" style="right:1752px;top:618px;font-size:24px;color:#212121;font-weight:400;letter-spacing:1.0px;">9399</div>
<div class="t" style="right:1388px;top:618px;font-size:24px;color:#212121;font-weight:400;letter-spacing:-0.7px;">WESMISTER</div>
<div class="t" style="right:921px;top:618px;font-size:24px;color:#212121;font-weight:400;letter-spacing:0.8px;">11.0</div>
<div class="a" style="left:174px;top:656px;width:1078px;height:54px;background:#f5f5f5;"></div>
<div class="t" style="right:1916.5px;top:672px;font-size:24px;color:#212121;font-weight:400;letter-spacing:1.0px;">9881</div>
<div class="t" style="right:1752px;top:672px;font-size:24px;color:#212121;font-weight:400;letter-spacing:1.0px;">4804</div>
<div class="t" style="right:1388px;top:672px;font-size:24px;color:#212121;font-weight:400;letter-spacing:-0.7px;">LITTLE FERRY</div>
<div class="t" style="right:921px;top:672px;font-size:24px;color:#212121;font-weight:400;letter-spacing:0.8px;">11.0</div>
<div class="t" style="right:1916.5px;top:726px;font-size:24px;color:#212121;font-weight:400;letter-spacing:1.0px;">9882</div>
<div class="t" style="right:1752px;top:726px;font-size:24px;color:#212121;font-weight:400;letter-spacing:1.0px;">6282</div>
<div class="t" style="right:1388px;top:726px;font-size:24px;color:#212121;font-weight:400;letter-spacing:-0.7px;">NORTH STRATFORD</div>
<div class="t" style="right:921px;top:726px;font-size:24px;color:#212121;font-weight:400;letter-spacing:0.8px;">11.0</div>
<div class="a" style="left:174px;top:764px;width:1078px;height:54px;background:#f5f5f5;"></div>
<div class="t" style="right:1916.5px;top:780px;font-size:24px;color:#212121;font-weight:400;letter-spacing:1.0px;">9883</div>
<div class="t" style="right:1752px;top:780px;font-size:24px;color:#212121;font-weight:400;letter-spacing:1.0px;">6263</div>
<div class="t" style="right:1388px;top:780px;font-size:24px;color:#212121;font-weight:400;letter-spacing:-0.7px;">NORTH PORT CARRIER ANNEX</div>
<div class="t" style="right:921px;top:780px;font-size:24px;color:#212121;font-weight:400;letter-spacing:0.8px;">11.0</div>
<div class="t" style="right:1916.5px;top:834px;font-size:24px;color:#212121;font-weight:400;letter-spacing:1.0px;">9884</div>
<div class="t" style="right:1752px;top:834px;font-size:24px;color:#212121;font-weight:400;letter-spacing:1.0px;">4878</div>
<div class="t" style="right:1388px;top:834px;font-size:24px;color:#212121;font-weight:400;letter-spacing:-0.7px;">LONS ANGELES</div>
<div class="t" style="right:921px;top:834px;font-size:24px;color:#212121;font-weight:400;letter-spacing:0.8px;">11.0</div>
<div class="t" style="left:173px;top:905px;font-size:28px;color:#212121;font-weight:400;">9885 rows × 3 columns</div>
<div class="a" style="left:174px;top:988px;width:1958px;height:58px;background:#f5f5f5;border:2px solid #e0e0e0;"></div>
<div class="t" style="right:1998px;top:1007px;font-size:26px;color:#a8a8a8;font-weight:400;font-family:'Liberation Mono',monospace;-webkit-text-stroke:0px;letter-spacing:0.6px;">[40]:</div>
<div class="t" style="left:186px;top:1006px;font-size:26px;color:#111111;font-weight:400;font-family:'Liberation Mono',monospace;-webkit-text-stroke:0.3px currentColor;">display(city_df)</div>
<div class="t" style="right:1662px;top:1072px;font-size:24px;color:#212121;font-weight:700;">name</div>
<div class="t" style="right:1537px;top:1072px;font-size:24px;color:#212121;font-weight:700;">pop</div>
<div class="t" style="right:1390px;top:1072px;font-size:24px;color:#212121;font-weight:700;">lat</div>
<div class="t" style="right:1230px;top:1072px;font-size:24px;color:#212121;font-weight:700;">lon</div>
<div class="a" style="left:174px;top:1110px;width:770px;height:2px;background:#bdbdbd;"></div>
<div class="t" style="right:1918px;top:1128px;font-size:24px;color:#212121;font-weight:400;letter-spacing:0px;">0</div>
<div class="t" style="right:1662px;top:1128px;font-size:24px;color:#212121;font-weight:400;letter-spacing:-0.7px;">NEW YORK</div>
<div class="t" style="right:1536px;top:1128px;font-size:24px;color:#212121;font-weight:400;letter-spacing:1.0px;">8287238</div>
<div class="t" style="right:1389px;top:1128px;font-size:24px;color:#212121;font-weight:400;letter-spacing:0.8px;">40.730599</div>
<div class="t" style="right:1229px;top:1128px;font-size:24px;color:#212121;font-weight:400;letter-spacing:0.8px;">-73.986581</div>
<div class="a" style="left:174px;top:1166px;width:770px;height:54px;background:#f5f5f5;"></div>
<div class="t" style="right:1918px;top:1182px;font-size:24px;color:#212121;font-weight:400;letter-spacing:0px;">1</div>
<div class="t" style="right:1662px;top:1182px;font-size:24px;color:#212121;font-weight:400;letter-spacing:-0.7px;">LOS ANGELES</div>
<div class="t" style="right:1536px;top:1182px;font-size:24px;color:#212121;font-weight:400;letter-spacing:1.0px;">3826423</div>
<div class="t" style="right:1389px;top:1182px;font-size:24px;color:#212121;font-weight:400;letter-spacing:0.8px;">34.053717</div>
<div class="t" style="right:1229px;top:1182px;font-size:24px;color:#212121;font-weight:400;letter-spacing:0.8px;">-118.242727</div>
<div class="t" style="right:1918px;top:1236px;font-size:24px;color:#212121;font-weight:400;letter-spacing:0px;">2</div>
<div class="t" style="right:1662px;top:1236px;font-size:24px;color:#212121;font-weight:400;letter-spacing:-0.7px;">CHICAGO</div>
<div class="t" style="right:1536px;top:1236px;font-size:24px;color:#212121;font-weight:400;letter-spacing:1.0px;">2705627</div>
<div class="t" style="right:1389px;top:1236px;font-size:24px;color:#212121;font-weight:400;letter-spacing:0.8px;">41.875555</div>
<div class="t" style="right:1229px;top:1236px;font-size:24px;color:#212121;font-weight:400;letter-spacing:0.8px;">-87.624421</div>
<div class="a" style="left:174px;top:1274px;width:770px;height:54px;background:#f5f5f5;"></div>
<div class="t" style="right:1918px;top:1290px;font-size:24px;color:#212121;font-weight:400;letter-spacing:0px;">3</div>
<div class="t" style="right:1662px;top:1290px;font-size:24px;color:#212121;font-weight:400;letter-spacing:-0.7px;">HOUSTON</div>
<div class="t" style="right:1536px;top:1290px;font-size:24px;color:#212121;font-weight:400;letter-spacing:1.0px;">2129784</div>
<div class="t" style="right:1389px;top:1290px;font-size:24px;color:#212121;font-weight:400;letter-spacing:0.8px;">29.758938</div>
<div class="t" style="right:1229px;top:1290px;font-size:24px;color:#212121;font-weight:400;letter-spacing:0.8px;">-95.367697</div>
<div class="a" style="left:2144px;top:171px;width:14px;height:203px;border-radius:7px;background:#808080"></div>
</div>
<div id="status"></div>
<div class="t" style="left:37px;top:1666px;font-size:26.3px;color:#212121;font-weight:400;">0</div>
<svg style="left:75px;top:1665px" width="30" height="30" viewBox="0 0 30 30"><rect width="30" height="30" fill="#424242"/><text x="4" y="22" font-family="Liberation Sans" font-size="16" fill="#fff">$</text><rect x="15" y="21" width="8" height="2" fill="#fff"/></svg>
<div class="t" style="left:124px;top:1666px;font-size:26.3px;color:#212121;font-weight:400;">3</div>
<svg style="left:162px;top:1665px" width="28" height="28" viewBox="0 0 28 28"><rect x="4.5" y="4.5" width="19" height="19" rx="2.5" fill="none" stroke="#616161" stroke-width="3"/><rect x="9.5" y="9.5" width="9" height="9" fill="none" stroke="#616161" stroke-width="2.2"/><rect x="12.5" y="12.5" width="3" height="3" fill="#616161"/><g stroke="#616161" stroke-width="2.4"><path d="M11.5 0v4M16.5 0v4M11.5 24v4M16.5 24v4M0 11.5h4M0 16.5h4M24 11.5h4M24 16.5h4"/></g></svg>
<div class="t" style="left:227px;top:1666px;font-size:26.3px;color:#212121;font-weight:400;letter-spacing:-0.12px;">Python 3 | Idle</div>
<div class="t" style="left:2236px;top:1666px;font-size:26.3px;color:#212121;font-weight:400;letter-spacing:-0.15px;">Mode: Command</div>
<svg style="left:2472px;top:1662px" width="30" height="32" viewBox="0 0 30 32"><path d="M15 2 L28 7 V15 q0 10 -13 15 q-13 -5 -13 -15 V7z" fill="none" stroke="#616161" stroke-width="2.6" stroke-linejoin="round"/><path d="M10 11 L20 21 M20 11 L10 21" stroke="#616161" stroke-width="2.6"/></svg>
<div class="t" style="left:2538px;top:1666px;font-size:26.3px;color:#212121;font-weight:400;letter-spacing:-1.2px;">Ln 1, Col 1</div>
<div class="t" style="left:2686px;top:1666px;font-size:26.3px;color:#212121;font-weight:400;letter-spacing:0.17px;">city-Lat.ipynb</div>
<div id="shelf"></div>
<div class="a" style="left:1369px;top:1704px;width:908px;height:96px;background:#515256"></div>
<svg style="left:45px;top:1735px" width="23" height="30" viewBox="0 0 23 30"><path d="M0 0 h15 l8 8 v22 h-23z" fill="#f4f4f4"/><rect x="3" y="7" width="17" height="12" fill="#5b8fd0"/><rect x="3" y="13" width="17" height="6" fill="#e8e4d8"/><circle cx="16" cy="16" r="4" fill="none" stroke="#555" stroke-width="1.5"/><text x="11.5" y="28" text-anchor="middle" font-family="Liberation Sans" font-size="7" fill="#333">PNG</text></svg>
<div class="t" style="left:97px;top:1745px;font-size:24px;color:#fff;font-weight:400;">Screen Shot 20....png</div>
<svg style="left:404px;top:1745px" width="20" height="13" viewBox="0 0 20 13"><path d="M2 11 L10 3 L18 11" fill="none" stroke="#9aa0a6" stroke-width="3"/></svg>
<div class="a" style="left:459px;top:1716px;width:2px;height:72px;background:#5f6368"></div>
<svg style="left:499px;top:1735px" width="23" height="30" viewBox="0 0 23 30"><path d="M0 0 h15 l8 8 v22 h-23z" fill="#f4f4f4"/><rect x="3" y="7" width="17" height="12" fill="#5b8fd0"/><rect x="3" y="13" width="17" height="6" fill="#e8e4d8"/><circle cx="16" cy="16" r="4" fill="none" stroke="#555" stroke-width="1.5"/><text x="11.5" y="28" text-anchor="middle" font-family="Liberation Sans" font-size="7" fill="#333">PNG</text></svg>
<div class="t" style="left:551px;top:1745px;font-size:24px;color:#fff;font-weight:400;">Screen Shot 20....png</div>
<svg style="left:858px;top:1745px" width="20" height="13" viewBox="0 0 20 13"><path d="M2 11 L10 3 L18 11" fill="none" stroke="#9aa0a6" stroke-width="3"/></svg>
<div class="a" style="left:913px;top:1716px;width:2px;height:72px;background:#5f6368"></div>
<svg style="left:953px;top:1735px" width="23" height="30" viewBox="0 0 23 30"><path d="M0 0 h15 l8 8 v22 h-23z" fill="#f4f4f4"/><rect x="5" y="18" width="3" height="6" fill="#e04040"/><rect x="9" y="14" width="3" height="10" fill="#f0a030"/><rect x="13" y="11" width="3" height="13" fill="#30a050"/><rect x="17" y="15" width="2.5" height="9" fill="#4080e0"/></svg>
<div class="t" style="left:1005px;top:1745px;font-size:24px;color:#fff;font-weight:400;">mapdata.csv</div>
<svg style="left:1312px;top:1745px" width="20" height="13" viewBox="0 0 20 13"><path d="M2 11 L10 3 L18 11" fill="none" stroke="#9aa0a6" stroke-width="3"/></svg>
<div class="a" style="left:1367px;top:1716px;width:2px;height:72px;background:#5f6368"></div>
<svg style="left:1407px;top:1735px" width="23" height="30" viewBox="0 0 23 30"><path d="M0 0 h15 l8 8 v22 h-23z" fill="#f4f4f4"/><rect x="3" y="7" width="17" height="12" fill="#5b8fd0"/><rect x="3" y="13" width="17" height="6" fill="#e8e4d8"/><circle cx="16" cy="16" r="4" fill="none" stroke="#555" stroke-width="1.5"/><text x="11.5" y="28" text-anchor="middle" font-family="Liberation Sans" font-size="7" fill="#333">PNG</text></svg>
<div class="t" style="left:1459px;top:1745px;font-size:24px;color:#fff;font-weight:400;">newplot (2).png</div>
<svg style="left:1766px;top:1745px" width="20" height="13" viewBox="0 0 20 13"><path d="M2 11 L10 3 L18 11" fill="none" stroke="#9aa0a6" stroke-width="3"/></svg>
<div class="a" style="left:1821px;top:1716px;width:2px;height:72px;background:#5f6368"></div>
<svg style="left:1861px;top:1735px" width="23" height="30" viewBox="0 0 23 30"><path d="M0 0 h15 l8 8 v22 h-23z" fill="#f4f4f4"/><rect x="3" y="7" width="17" height="12" fill="#5b8fd0"/><rect x="3" y="13" width="17" height="6" fill="#e8e4d8"/><circle cx="16" cy="16" r="4" fill="none" stroke="#555" stroke-width="1.5"/><text x="11.5" y="28" text-anchor="middle" font-family="Liberation Sans" font-size="7" fill="#333">PNG</text></svg>
<div class="t" style="left:1913px;top:1745px;font-size:24px;color:#fff;font-weight:400;">newplot (1).png</div>
<svg style="left:2220px;top:1745px" width="20" height="13" viewBox="0 0 20 13"><path d="M2 11 L10 3 L18 11" fill="none" stroke="#9aa0a6" stroke-width="3"/></svg>
<div class="a" style="left:2275px;top:1716px;width:2px;height:72px;background:#5f6368"></div>
<div class="a" style="left:2651px;top:1719px;width:156px;height:62px;border-radius:8px;background:#292a2d"></div>
<div class="t" style="left:2682px;top:1738px;font-size:24px;color:#fff;font-weight:400;">Show All</div>
<svg style="left:2834px;top:1740px" width="20" height="20" viewBox="0 0 20 20"><path d="M2 2 L18 18 M18 2 L2 18" stroke="#e8eaed" stroke-width="3"/></svg>
</div></body></html>
